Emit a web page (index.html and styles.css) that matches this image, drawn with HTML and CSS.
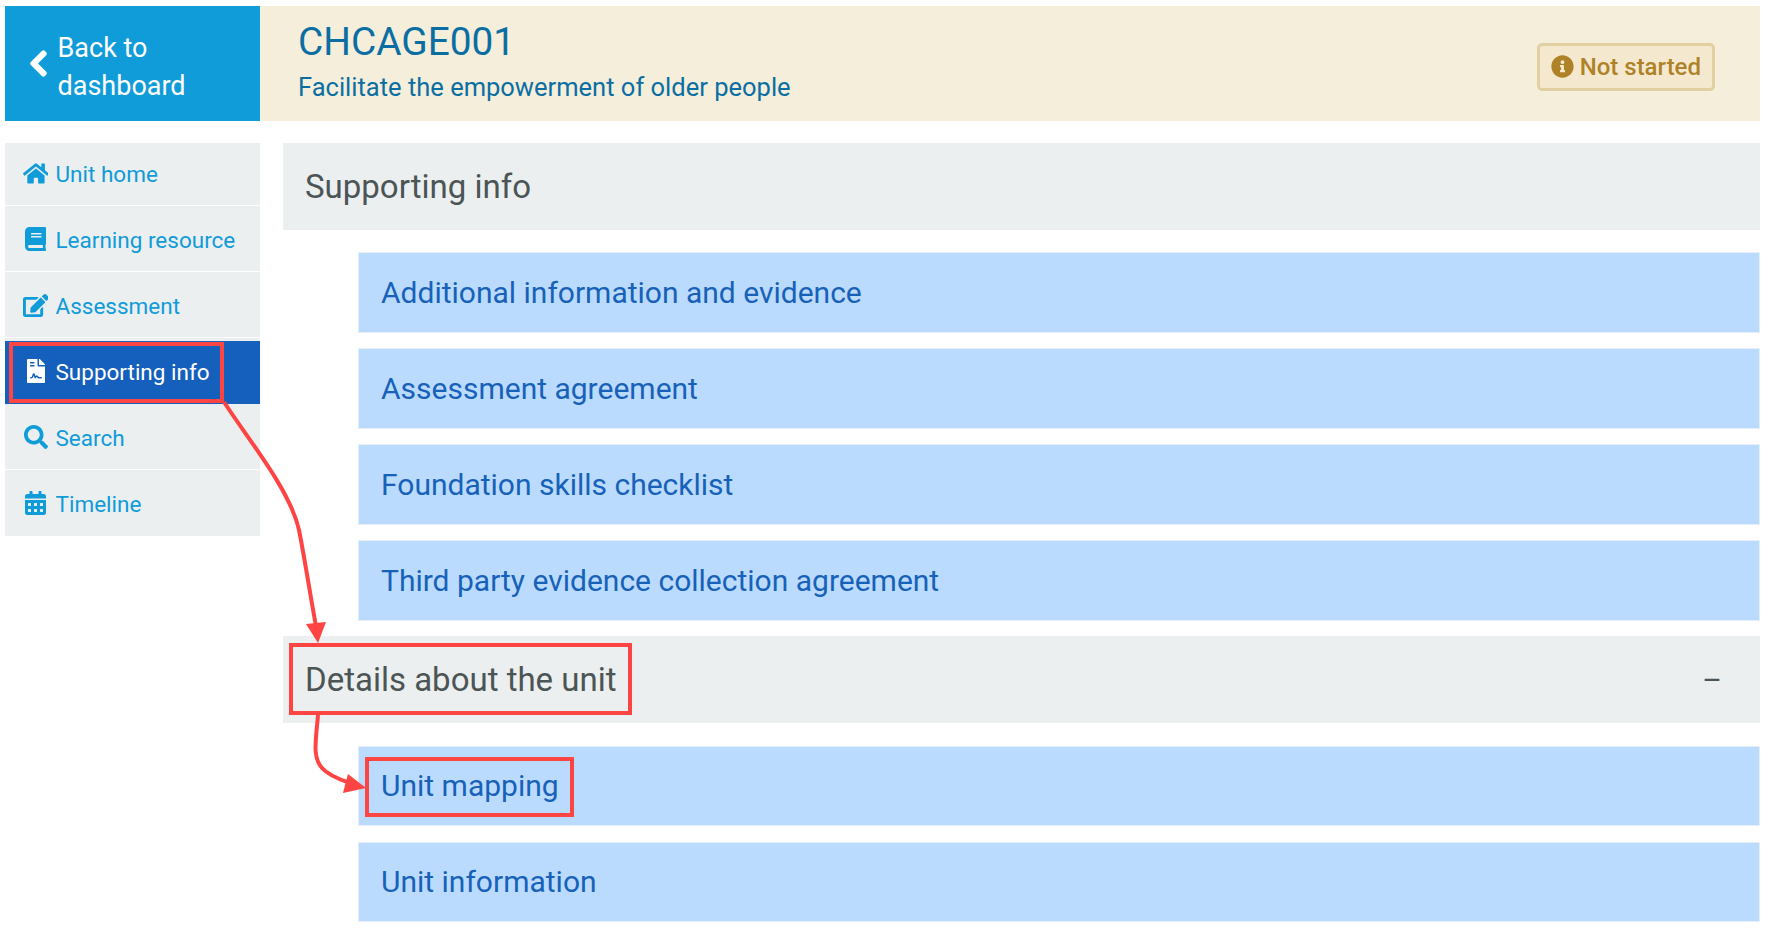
FILE: index.html
```html
<!DOCTYPE html>
<html lang="en">
<head>
<meta charset="utf-8">
<title>CHCAGE001</title>
<link rel="stylesheet" href="styles.css">
</head>
<body>
<div class="page">
  <header class="top">
    <a class="back">
      <svg class="back-icon" viewBox="0 0 320 512"><path d="M34.52 239.03L228.87 44.69c9.37-9.37 24.57-9.37 33.94 0l22.67 22.67c9.36 9.36 9.37 24.52.04 33.9L131.49 256l154.02 154.75c9.34 9.38 9.32 24.54-.04 33.9l-22.67 22.67c-9.37 9.37-24.57 9.37-33.94 0L34.52 272.97c-9.37-9.37-9.37-24.57 0-33.94z"/></svg>
      <span class="back-label">Back to<br>dashboard</span>
    </a>
    <div class="unit">
      <div class="unit-text">
        <h1>CHCAGE001</h1>
        <p>Facilitate the empowerment of older people</p>
      </div>
      <div class="badge">
        <svg class="badge-icon" viewBox="0 0 512 512"><path d="M256 8C119.043 8 8 119.083 8 256c0 136.997 111.043 248 248 248s248-111.003 248-248C504 119.083 392.957 8 256 8zm0 110c23.196 0 42 18.804 42 42s-18.804 42-42 42-42-18.804-42-42 18.804-42 42-42zm56 254c0 6.627-5.373 12-12 12h-88c-6.627 0-12-5.373-12-12v-24c0-6.627 5.373-12 12-12h12v-64h-12c-6.627 0-12-5.373-12-12v-24c0-6.627 5.373-12 12-12h64c6.627 0 12 5.373 12 12v100h12c6.627 0 12 5.373 12 12v24z"/></svg>
        <span>Not started</span>
      </div>
    </div>
  </header>
  <div class="body">
    <nav class="side">
      <a class="item">
        <span class="icon"><svg class="i-wide" viewBox="0 0 576 512"><path d="M280.37 148.26L96 300.11V464a16 16 0 0 0 16 16l112.06-.29a16 16 0 0 0 15.92-16V368a16 16 0 0 1 16-16h64a16 16 0 0 1 16 16v95.64a16 16 0 0 0 16 16.05L464 480a16 16 0 0 0 16-16V300L295.67 148.26a12.19 12.19 0 0 0-15.3 0zM571.6 251.47L488 182.56V44.05a12 12 0 0 0-12-12h-56a12 12 0 0 0-12 12v72.61L318.47 43a48 48 0 0 0-61 0L4.34 251.47a12 12 0 0 0-1.6 16.9l25.5 31A12 12 0 0 0 45.15 301l235.22-193.74a12.19 12.19 0 0 1 15.3 0L530.9 301a12 12 0 0 0 16.9-1.6l25.5-31a12 12 0 0 0-1.7-16.93z"/></svg></span>
        Unit home
      </a>
      <a class="item">
        <span class="icon"><svg viewBox="0 0 448 512"><path d="M448 360V24c0-13.3-10.7-24-24-24H96C43 0 0 43 0 96v320c0 53 43 96 96 96h328c13.3 0 24-10.7 24-24v-16c0-7.5-3.5-14.3-8.9-18.7-4.2-15.4-4.2-59.3 0-74.7 5.4-4.3 8.9-11.1 8.9-18.6zM128 134c0-3.3 2.7-6 6-6h212c3.3 0 6 2.7 6 6v20c0 3.3-2.7 6-6 6H134c-3.3 0-6-2.7-6-6v-20zm0 64c0-3.3 2.7-6 6-6h212c3.3 0 6 2.7 6 6v20c0 3.3-2.7 6-6 6H134c-3.3 0-6-2.7-6-6v-20zm253.4 250H96c-17.7 0-32-14.3-32-32 0-17.6 14.4-32 32-32h285.4c-1.9 17.1-1.9 46.9 0 64z"/></svg></span>
        Learning resource
      </a>
      <a class="item">
        <span class="icon"><svg class="i-wide" viewBox="0 0 576 512"><path d="M402.6 83.2l90.2 90.2c3.8 3.8 3.8 10 0 13.8L274.4 405.6l-92.8 10.3c-12.4 1.4-22.9-9.1-21.5-21.5l10.3-92.8L388.8 83.2c3.8-3.8 10-3.8 13.8 0zm162-22.9l-48.8-48.8c-15.2-15.2-39.9-15.2-55.2 0l-35.4 35.4c-3.8 3.8-3.8 10 0 13.8l90.2 90.2c3.8 3.8 10 3.8 13.8 0l35.4-35.4c15.2-15.3 15.2-40 0-55.2zM384 346.2V448H64V128h229.8c3.2 0 6.2-1.3 8.5-3.5l40-40c7.6-7.6 2.2-20.5-8.5-20.5H48C21.5 64 0 85.5 0 112v352c0 26.5 21.5 48 48 48h352c26.5 0 48-21.5 48-48V306.2c0-10.7-12.9-16-20.5-8.5l-40 40c-2.2 2.3-3.5 5.3-3.5 8.5z"/></svg></span>
        Assessment
      </a>
      <a class="item active">
        <span class="icon"><svg viewBox="0 0 384 512"><path d="M224 136V0H24C10.7 0 0 10.7 0 24v464c0 13.3 10.7 24 24 24h336c13.3 0 24-10.7 24-24V160H248c-13.2 0-24-10.8-24-24zM64 72c0-4.42 3.58-8 8-8h80c4.42 0 8 3.58 8 8v16c0 4.42-3.58 8-8 8H72c-4.42 0-8-3.58-8-8V72zm0 64c0-4.42 3.58-8 8-8h80c4.42 0 8 3.58 8 8v16c0 4.42-3.58 8-8 8H72c-4.42 0-8-3.58-8-8v-16zm192.81 248H304c8.84 0 16 7.16 16 16s-7.16 16-16 16h-47.19c-16.45 0-31.27-9.14-38.64-23.86-2.95-5.92-8.09-6.52-10.17-6.52s-7.22.59-10.02 6.19l-7.67 15.34a15.986 15.986 0 0 1-14.31 8.84c-.38 0-.75-.02-1.14-.05-6.45-.45-12-4.75-14.03-10.89L144 354.59l-10.61 31.88c-5.89 17.66-22.38 29.53-41 29.53H80c-8.84 0-16-7.16-16-16s7.16-16 16-16h12.39c4.83 0 9.11-3.08 10.64-7.66l18.19-54.64c3.3-9.81 12.44-16.41 22.78-16.41s19.48 6.59 22.77 16.41l13.88 41.64c19.77-16.19 54.05-9.7 66 14.16 2.02 4.06 5.96 6.5 10.16 6.5zM377 105L279.1 7c-4.5-4.5-10.6-7-17-7H256v128h128v-6.1c0-6.3-2.5-12.4-7-16.9z"/></svg></span>
        Supporting info
      </a>
      <a class="item">
        <span class="icon"><svg viewBox="0 0 512 512"><path d="M505 442.7L405.3 343c-4.5-4.5-10.6-7-17-7H372c27.6-35.3 44-79.7 44-128C416 93.1 322.9 0 208 0S0 93.1 0 208s93.1 208 208 208c48.3 0 92.7-16.4 128-44v16.3c0 6.4 2.5 12.5 7 17l99.7 99.7c9.4 9.4 24.6 9.4 33.9 0l28.3-28.3c9.4-9.4 9.4-24.6.1-34zM208 336c-70.7 0-128-57.2-128-128 0-70.7 57.2-128 128-128 70.7 0 128 57.2 128 128 0 70.7-57.2 128-128 128z"/></svg></span>
        Search
      </a>
      <a class="item">
        <span class="icon"><svg viewBox="0 0 448 512"><path d="M0 464c0 26.5 21.5 48 48 48h352c26.5 0 48-21.5 48-48V192H0v272zm320-196c0-6.6 5.4-12 12-12h40c6.6 0 12 5.4 12 12v40c0 6.6-5.4 12-12 12h-40c-6.6 0-12-5.4-12-12v-40zm0 128c0-6.6 5.4-12 12-12h40c6.6 0 12 5.4 12 12v40c0 6.6-5.4 12-12 12h-40c-6.6 0-12-5.4-12-12v-40zM192 268c0-6.6 5.4-12 12-12h40c6.6 0 12 5.4 12 12v40c0 6.6-5.4 12-12 12h-40c-6.6 0-12-5.4-12-12v-40zm0 128c0-6.6 5.4-12 12-12h40c6.6 0 12 5.4 12 12v40c0 6.6-5.4 12-12 12h-40c-6.6 0-12-5.4-12-12v-40zM64 268c0-6.6 5.4-12 12-12h40c6.6 0 12 5.4 12 12v40c0 6.6-5.4 12-12 12H76c-6.6 0-12-5.4-12-12v-40zm0 128c0-6.6 5.4-12 12-12h40c6.6 0 12 5.4 12 12v40c0 6.6-5.4 12-12 12H76c-6.6 0-12-5.4-12-12v-40zM400 64h-48V16c0-8.8-7.2-16-16-16h-32c-8.8 0-16 7.2-16 16v48H160V16c0-8.8-7.2-16-16-16h-32c-8.8 0-16 7.2-16 16v48H48C21.5 64 0 85.5 0 112v48h448v-48c0-26.5-21.5-48-48-48z"/></svg></span>
        Timeline
      </a>
    </nav>
    <main class="content">
      <section class="group">
        <h2 class="group-head">Supporting info</h2>
        <ul class="rows">
          <li class="row">Additional information and evidence</li>
          <li class="row">Assessment agreement</li>
          <li class="row">Foundation skills checklist</li>
          <li class="row">Third party evidence collection agreement</li>
        </ul>
      </section>
      <section class="group">
        <h2 class="group-head">Details about the unit<span class="toggle">–</span></h2>
        <ul class="rows">
          <li class="row">Unit mapping</li>
          <li class="row">Unit information</li>
        </ul>
      </section>
    </main>
  </div>
</div>
<svg class="notes" viewBox="0 0 1770 930" width="1770" height="930">
  <g class="note-line">
    <rect x="11" y="344" width="211" height="57"/>
    <rect x="291" y="645" width="339" height="68"/>
    <rect x="367" y="759" width="205" height="56"/>
    <path d="M224 402 C250 442 290 490 299 530 C305 560 311 600 316 626"/>
    <path d="M318 715 C316 740 312 757 322 768 C328 775 338 779 350 783"/>
  </g>
  <g class="note-head">
    <polygon points="306,624 326,622 318,643"/>
    <polygon points="348,774 343,793 366,788"/>
  </g>
</svg>
</body>
</html>
```
FILE: styles.css
```css
* { box-sizing: border-box; }
html, body { margin: 0; padding: 0; background: #fff; }
body { font-family: Roboto, "Liberation Sans", sans-serif; width: 1770px; height: 930px; overflow: hidden; position: relative; }
.page { padding: 6px 10px 0 5px; }
.top { display: flex; height: 115px; }
.back { width: 255px; flex: none; background: #109bd9; color: #fff; display: flex; align-items: center; padding-left: 24px; gap: 9.5px; font-size: 27px; line-height: 38px; }
.back-label { padding-top: 7px; }
.back-icon { width: 19px; height: 29px; fill: #fff; stroke: #fff; stroke-width: 30; flex: none; }
.unit { flex: 1; background: #f5eeda; display: flex; align-items: center; justify-content: space-between; padding: 0 45px 0 38px; }
.unit-text { margin-top: -4px; }
.unit h1 { margin: 0; font-weight: 400; font-size: 38.8px; line-height: 46px; color: #0b6ea3; }
.unit p { margin: 5px 0 0; font-size: 25.5px; line-height: 34px; color: #0b6ea3; }
.badge { display: flex; align-items: center; gap: 6px; height: 48px; margin-top: 6px; padding: 0 11px; border: 3px solid #e3d0a2; border-radius: 5px; background: #f4e9cf; color: #b08227; font-size: 24px; font-weight: 500; }
.badge-icon { width: 23px; height: 23px; fill: #b08227; }
.body { display: flex; margin-top: 22px; gap: 23px; }
.side { width: 255px; flex: none; display: flex; flex-direction: column; gap: 3px; align-self: flex-start; background: #ebeff0; }
.item { height: 63px; padding-left: 17px; display: flex; align-items: center; color: #109bd9; font-size: 22.5px; border-bottom: 1px solid #fff; }
.item:last-child { border-bottom-color: #ebeff0; }
.item.active { background: #1560bc; color: #fff; border-bottom-color: #1560bc; }
.icon { width: 27px; display: flex; justify-content: center; margin-right: 6.5px; flex: none; margin-top: -2px; }
.icon svg { height: 24px; width: auto; fill: currentColor; display: block; }
.icon .i-wide { height: 23px; }
.content { flex: 1; display: flex; flex-direction: column; gap: 15.5px; }
.group-head { margin: 0; height: 87px; background: #ebeff0; display: flex; align-items: center; justify-content: space-between; padding: 0 38px 0 22px; font-size: 33px; font-weight: 400; color: #4b5556; }
.toggle { font-size: 30px; }
.rows { list-style: none; margin: 22.25px 0 0; padding: 0 0 0 75px; display: flex; flex-direction: column; gap: 15.5px; }
.row { height: 80.5px; background: #bbdbfe; border: 1px solid #e6eef6; display: flex; align-items: center; padding-left: 22px; padding-bottom: 1px; color: #1762b8; font-size: 30px; }
.notes { position: absolute; left: 0; top: 0; pointer-events: none; }
.note-line { fill: none; stroke: #ff4444; stroke-width: 4; }
.note-head { fill: #ff4444; }
```
